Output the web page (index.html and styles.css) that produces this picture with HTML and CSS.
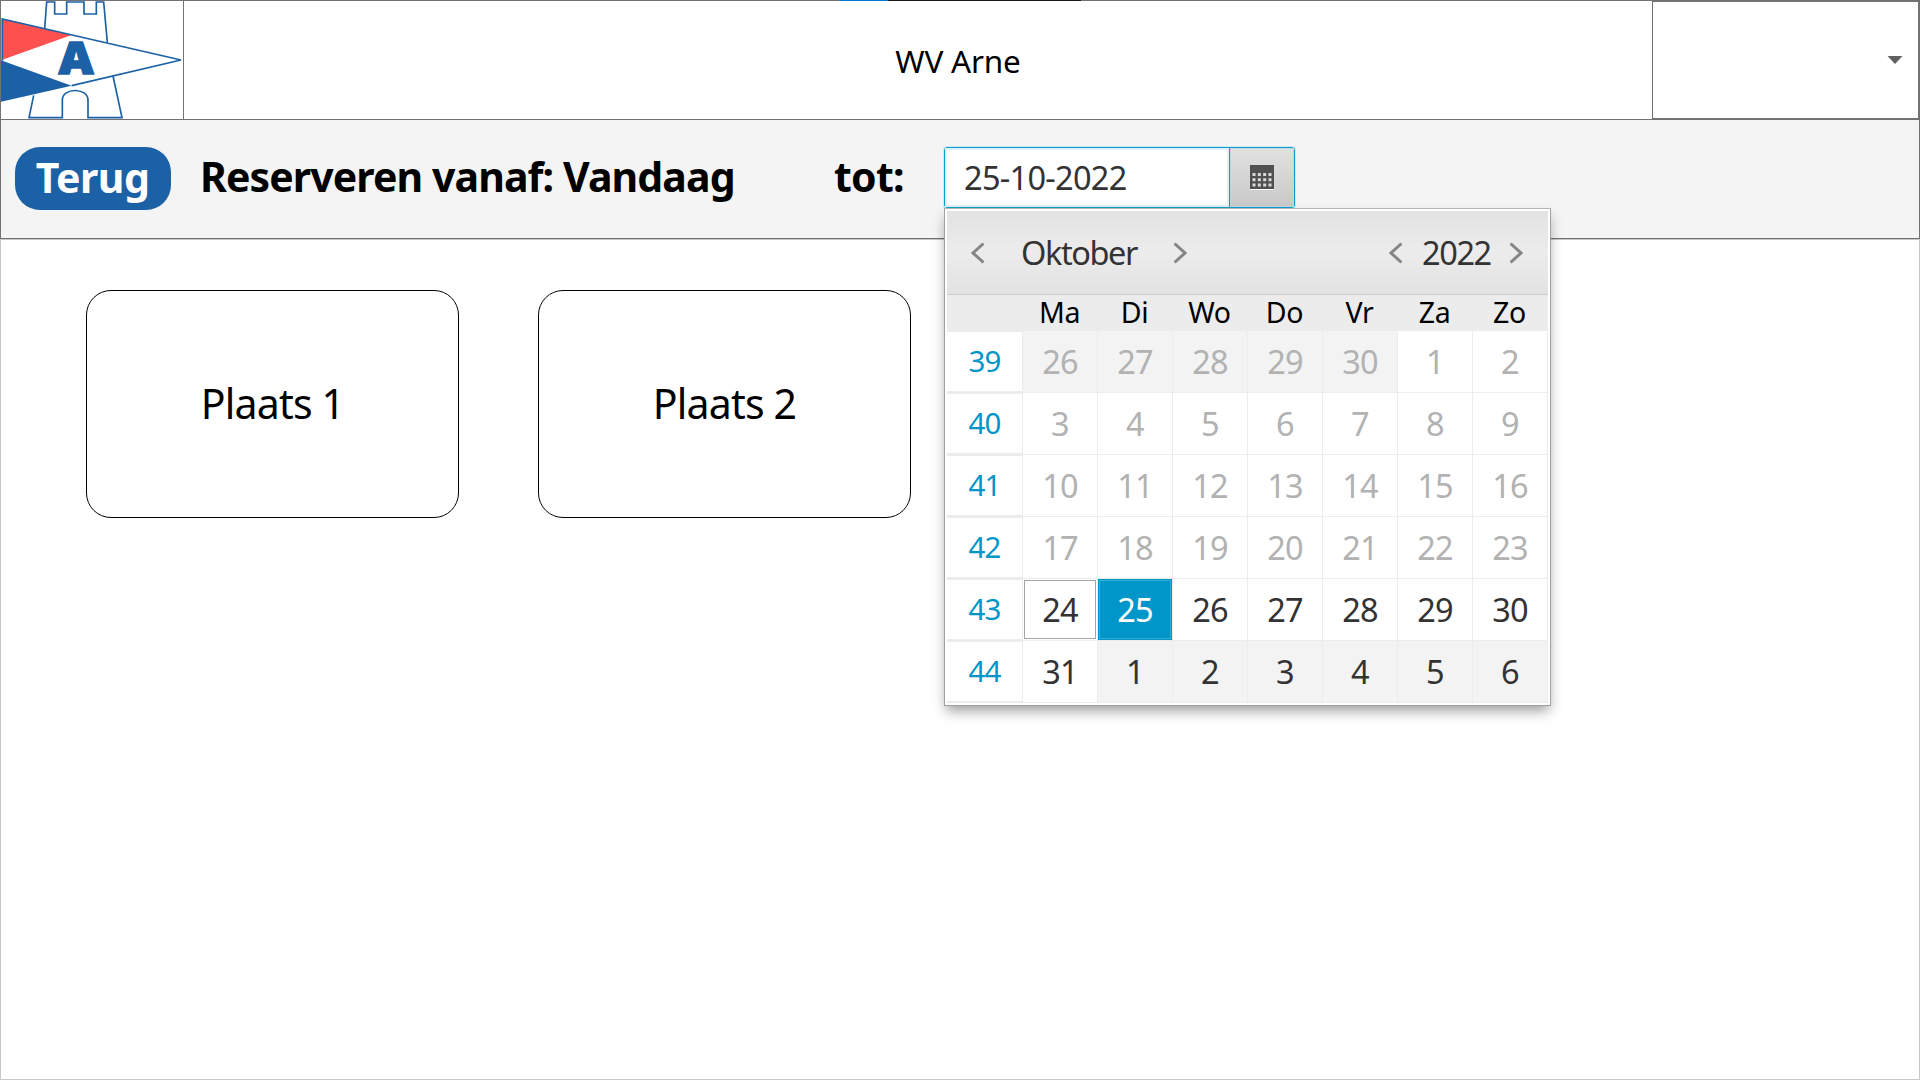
FILE: index.html
```html
<!DOCTYPE html>
<html lang="nl">
<head>
<meta charset="utf-8">
<title>WV Arne</title>
<link rel="stylesheet" href="styles.css">
</head>
<body>
<div class="app">
  <header class="topbar">
    <div class="logo">
      <svg viewBox="0 0 549 357" width="183" height="119">
        <g fill="none" stroke="#1c61a5" stroke-width="5">
          <path d="M134 85 L140 6 H164 V42 H200 V6 H252 V42 H289 V6 H311 L322 127"/>
          <path d="M101 286 L87 353 H187 V300 C187 262 264 262 264 300 V353 H366 L339 228"/>
        </g>
        <path d="M5 55 L215 105 L5 180 Z" fill="#ff5050"/>
        <path d="M3 181 L215 257 L3 305 Z" fill="#1c61a5"/>
        <path d="M7 182 V57 L543 180 L215 257" fill="none" stroke="#1c61a5" stroke-width="5"/>
        <text class="logo-letter" x="176" y="223" textLength="104" lengthAdjust="spacingAndGlyphs">A</text>
      </svg>
    </div>
    <h1 class="club">WV Arne</h1>
    <div class="account">
      <svg width="16" height="8" viewBox="0 0 16 8"><path d="M.5 0H15.5L8 8Z" fill="#606060"/></svg>
    </div>
    <div class="notch"></div>
  </header>
  <div class="toolbar">
    <button class="back"><span>Terug</span></button>
    <div class="from">Reserveren vanaf: Vandaag</div>
    <div class="until">tot:</div>
    <div class="picker">
      <div class="picker-value"><span>25-10-2022</span></div>
      <div class="picker-button">
        <svg width="24" height="25" viewBox="0 0 24 25">
          <path d="M0 24H24V25H0Z" fill="#fff"/>
          <path d="M0 0H24V24H0Z" fill="#505050"/>
          <g stroke="#d8d8d8" stroke-width="3" stroke-dasharray="3 2.33">
            <path d="M2.5 9.5H21.5M2.5 14.8H21.5M2.5 20.1H21.5"/>
          </g>
        </svg>
      </div>
      <div class="calendar">
        <div class="cal-head">
          <svg class="arrow" width="13" height="22" viewBox="0 0 13 22"><path d="M12.5 1.5L2 11L12.5 20.5"/></svg>
          <span class="month">Oktober</span>
          <svg class="arrow" width="13" height="22" viewBox="0 0 13 22"><path d="M.5 1.5L11 11L.5 20.5"/></svg>
          <svg class="arrow year-prev" width="13" height="22" viewBox="0 0 13 22"><path d="M12.5 1.5L2 11L12.5 20.5"/></svg>
          <span class="year">2022</span>
          <svg class="arrow" width="13" height="22" viewBox="0 0 13 22"><path d="M.5 1.5L11 11L.5 20.5"/></svg>
        </div>
        <div class="names"><i></i><b>Ma</b><b>Di</b><b>Wo</b><b>Do</b><b>Vr</b><b>Za</b><b>Zo</b></div>
        <div class="week past"><i>39</i><b class="other">26</b><b class="other">27</b><b class="other">28</b><b class="other">29</b><b class="other">30</b><b>1</b><b>2</b></div>
        <div class="week past"><i>40</i><b>3</b><b>4</b><b>5</b><b>6</b><b>7</b><b>8</b><b>9</b></div>
        <div class="week past"><i>41</i><b>10</b><b>11</b><b>12</b><b>13</b><b>14</b><b>15</b><b>16</b></div>
        <div class="week past"><i>42</i><b>17</b><b>18</b><b>19</b><b>20</b><b>21</b><b>22</b><b>23</b></div>
        <div class="week"><i>43</i><b class="today">24</b><b class="selected">25</b><b>26</b><b>27</b><b>28</b><b>29</b><b>30</b></div>
        <div class="week"><i>44</i><b>31</b><b class="other">1</b><b class="other">2</b><b class="other">3</b><b class="other">4</b><b class="other">5</b><b class="other">6</b></div>
      </div>
    </div>
  </div>
  <main class="places">
    <div class="place">Plaats 1</div>
    <div class="place">Plaats 2</div>
  </main>
</div>
</body>
</html>
```
FILE: styles.css
```css
* { box-sizing: border-box; }
body { margin: 0; background: #fff; color: #000; font-family: "Noto Sans", "Open Sans", sans-serif; }
svg { display: block; flex: none; }
.app { width: 1920px; height: 1080px; display: flex; flex-direction: column; overflow: hidden; }

.topbar { position: relative; flex: none; height: 119px; display: grid; grid-template-columns: 184px 1fr 268px; }
.logo { border-right: 1px solid #727272; overflow: hidden; box-shadow: inset 1px 1px #727272; }
.logo-letter { font-family: "Open Sans", sans-serif; font-weight: 800; font-size: 134px; fill: #1c61a5; stroke: #1c61a5; stroke-width: 5px; }
.club { margin: 0; padding-top: 1px; padding-left: 80px; border-top: 1px solid #727272; font-size: 31.5px; letter-spacing: -.2px; font-weight: 400; display: flex; align-items: center; justify-content: center; }
.account { border: 1px solid #727272; border-width: 2px 2px 1px 1px; display: flex; align-items: center; justify-content: flex-end; padding-right: 15px; }
.notch { position: absolute; left: 840px; top: 0; width: 241px; height: 1px; background: linear-gradient(90deg, #0078d7 48px, #1b1b1b 48px); }

.toolbar { flex: none; height: 120px; background: #f4f4f4; border: 1px solid #727272; padding: 27px 0 0 14px; display: flex; align-items: flex-start; }
.back { width: 156px; height: 63px; border: 0; border-radius: 25px; background: #1c61a5; color: #fff; font: bold 41px/60px "Noto Sans", sans-serif; letter-spacing: -.5px; padding: 0 1px 3px 0; }
.from, .until { font-weight: bold; font-size: 41px; line-height: 58px; white-space: nowrap; }
.from { width: 634px; padding-left: 29px; letter-spacing: -.9px; }
.until { width: 139px; padding-left: 29px; letter-spacing: -.7px; }

.picker { position: relative; width: 351px; height: 61px; border: 1px solid #0f9dcf; border-radius: 3px; display: flex; box-shadow: 0 0 0 1px #cdeaf4; }
.picker-value { width: 285px; background: #fff; box-shadow: inset 0 0 0 2px #e0f2f9; border-right: 1px solid #0f9dcf; padding-left: 19px; font-size: 32.5px; letter-spacing: -.7px; line-height: 59px; color: #333; }
.picker-button { flex: 1; background: linear-gradient(#e1e1e1, #c8c8c8); box-shadow: inset 0 0 0 1px #c6d5dc; display: flex; align-items: center; padding-left: 20px; }

.calendar { position: absolute; left: -1px; top: 60px; width: 607px; height: 498px; padding: 2px; border: 1px solid #a0a0a0; border-top-color: #b4b4b4; background: #fff; box-shadow: 0 7px 12px -2px rgba(0, 0, 0, .38); font-size: 32.5px; color: #333; }
.cal-head { width: 601px; height: 84px; background: linear-gradient(#e2e2e2, #ececec 50%, #e2e2e2); border-bottom: 1px solid #cfcfcf; display: flex; align-items: center; padding-left: 24px; letter-spacing: -1.4px; }
.arrow { fill: none; stroke: #858585; stroke-width: 3; }
.month { width: 190px; padding-left: 37px; }
.year-prev { margin-left: 202px; }
.year { width: 108px; padding-left: 20px; }
.names, .week { display: grid; grid-template-columns: 76px repeat(7, 75px); text-align: center; }
.names { width: 601px; height: 36px; background: #ececec; color: #000; font-size: 28.5px; letter-spacing: -.3px; line-height: 34px; }
.names b, .week b { font-weight: 400; }
.names b { padding-right: 2px; }
.week { height: 62px; line-height: 61px; letter-spacing: -.8px; }
.week i { font-style: normal; font-size: 29.5px; line-height: 58px; color: #0096c9; border: solid #ececec; border-width: 1px 1px 2px 0; height: 62px; overflow: hidden; }
.week b { border: solid #ececec; border-width: 0 1px 1px 0; }
.past b { color: #b2b2b2; }
.week .other { background: #f3f3f3; }
.week .today { box-shadow: inset 0 0 0 1px #fff, inset 0 0 0 2px #a5a5a5; }
.week .selected { background: #0096c9; background-clip: padding-box; color: #fff; box-shadow: inset 0 0 0 1px #0096c9, inset 0 0 0 2px #33abd4; }

.places { flex: 1; border: 1px solid #c8c8c8; padding: 50px 0 0 85px; display: flex; gap: 79px; align-items: flex-start; }
.place { width: 373px; height: 228px; border: 1px solid #000; border-radius: 25px; display: flex; align-items: center; justify-content: center; padding-bottom: 3px; font-size: 41px; letter-spacing: -.8px; }
```
